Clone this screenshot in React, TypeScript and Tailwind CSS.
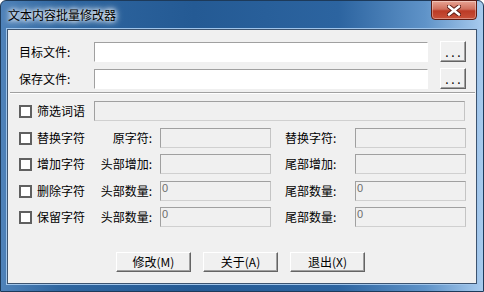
const font = "font-['SimSun','Noto_Sans_CJK_SC',sans-serif]"

const Field = ({ w, disabled, value }: { w: string; disabled?: boolean; value?: string }) => (
  <div
    className={`${w} h-[20px] shrink-0 border ${
      disabled
        ? 'border-[#a0a0a0] border-r-[#c4c4c4] border-b-[#d0d0d0] bg-[#f0f0f0]'
        : 'border-[#a0a0a0] border-r-white border-b-white bg-white'
    } pl-[1px] pt-[1px] text-[11px] leading-[11px] text-[#6d6d6d] font-['Liberation_Sans',sans-serif]`}
  >
    {value}
  </div>
)

const Box = () => (
  <div className="h-[13px] w-[13px] shrink-0 border-2 border-[#606060] bg-white" />
)

const Btn = ({ label, w = 'w-[75px]', h = 'h-[20px]' }: { label: string; w?: string; h?: string }) => (
  <div
    className={`${w} ${h} flex items-center justify-center border border-white border-r-[#646464] border-b-[#646464] bg-[#f0f0f0] shadow-[inset_-1px_-1px_#a0a0a0] text-[12px] text-black`}
  >
    {label}
  </div>
)

const FileRow = ({ label }: { label: string }) => (
  <div className="flex h-[21px] items-center pl-[11px]">
    <span className="w-[75px] text-[12px] text-black">{label}</span>
    <Field w="w-[334px]" />
    <div className="ml-[12px]">
      <Btn label=". . ." w="w-[26px]" h="h-[21px]" />
    </div>
  </div>
)

const OptRow = ({
  name,
  left,
  right,
  value,
  mt,
}: {
  name: string
  left: string
  right: string
  value?: string
  mt: string
}) => (
  <div className={`${mt} flex h-[20px] items-center pl-[11px]`}>
    <div className="flex w-[81px] items-center gap-[5px]">
      <Box />
      <span className="text-[12px] text-black">{name}</span>
    </div>
    <span className="w-[60px] pr-[8px] text-right text-[12px] text-black">{left}</span>
    <Field w="w-[111px]" disabled value={value} />
    <span className="ml-[14px] w-[70px] text-[12px] text-black">{right}</span>
    <Field w="w-[111px]" disabled value={value} />
  </div>
)

export default function App() {
  return (
    <div className={`${font} h-[292px] w-[484px] bg-white`}>
      <div className="flex h-full w-full flex-col rounded-t-[6px] border border-[#1d3a5a] bg-[linear-gradient(to_right,#4f82b9_0%,#2f66a0_12%,#245a94_40%,#2c64a0_70%,#5f93c8_88%,#a8cbee_100%)]">
        <div className="relative flex h-[28px] shrink-0 items-start">
          <span className="ml-[7px] mt-[7px] text-[12px] leading-[14px] text-black [text-shadow:0_0_4px_#fff,0_0_6px_#fff,0_0_8px_#e6f0fa]">
            文本内容批量修改器
          </span>
          <div className="absolute right-[6px] top-[-1px] flex h-[20px] w-[46px] items-center justify-center rounded-b-[4px] border border-[#5e1b12] bg-[linear-gradient(to_bottom,#e8a494_0%,#d0705d_45%,#bb3b26_55%,#c8513a_100%)] shadow-[inset_0_0_0_1px_rgba(255,255,255,0.35)]">
            <svg width="14" height="11" viewBox="0 0 14 11">
              <path d="M2 1.5 L12 9.5 M12 1.5 L2 9.5" stroke="#5a1a12" strokeWidth="4.4" strokeLinecap="round" />
              <path d="M2 1.5 L12 9.5 M12 1.5 L2 9.5" stroke="#fff" strokeWidth="2.6" strokeLinecap="round" />
            </svg>
          </div>
        </div>
        <div className="mx-[6px] mb-[7px] flex grow flex-col border border-[#3d5470] bg-[#f0f0f0] shadow-[0_0_0_1px_#9fc4ea]">
          <div className="mt-[11px]">
            <FileRow label="目标文件:" />
          </div>
          <div className="mt-[6px]">
            <FileRow label="保存文件:" />
          </div>
          <div className="ml-[2px] mr-[1px] mt-[3px] h-[2px] border-t border-[#a0a0a0] bg-white" />
          <div className="mt-[7px] flex h-[20px] items-center pl-[11px]">
            <div className="flex w-[75px] items-center gap-[5px]">
              <Box />
              <span className="text-[12px] text-black">筛选词语</span>
            </div>
            <Field w="w-[371px]" disabled />
          </div>
          <OptRow mt="mt-[7px]" name="替换字符" left="原字符:" right="替换字符:" />
          <OptRow mt="mt-[6px]" name="增加字符" left="头部增加:" right="尾部增加:" />
          <OptRow mt="mt-[7px]" name="删除字符" left="头部数量:" right="尾部数量:" value="0" />
          <OptRow mt="mt-[6px]" name="保留字符" left="头部数量:" right="尾部数量:" value="0" />
          <div className="mt-[25px] flex gap-[12px] pl-[108px]">
            <Btn label="修改(M)" />
            <Btn label="关于(A)" />
            <Btn label="退出(X)" />
          </div>
        </div>
      </div>
    </div>
  )
}
